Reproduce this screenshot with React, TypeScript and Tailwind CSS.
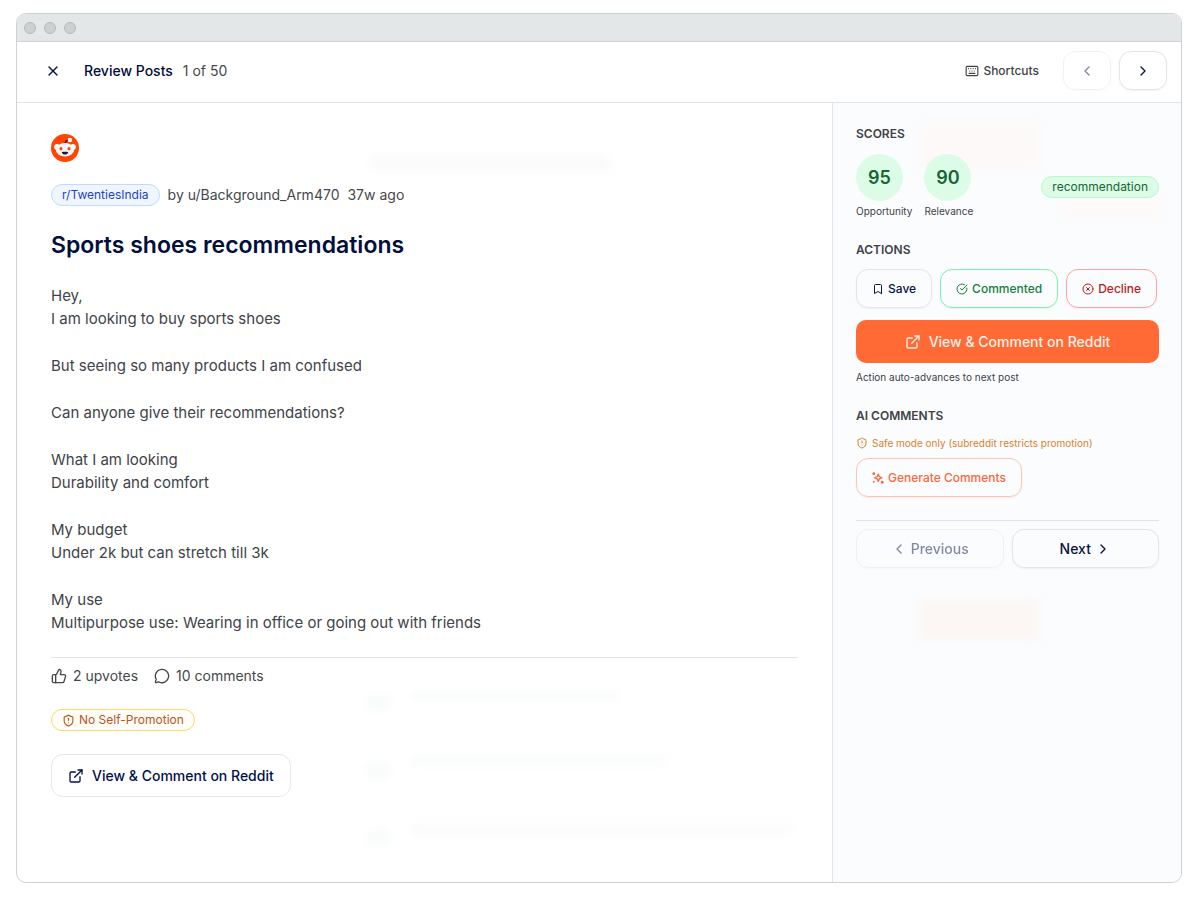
import type { ButtonHTMLAttributes, ReactNode } from 'react';
import {
    Bookmark,
    ChevronLeft,
    ChevronRight,
    CircleCheckBig,
    CircleX,
    ExternalLink,
    Keyboard,
    MessageCircle,
    ShieldAlert,
    ThumbsUp,
    X,
} from 'lucide-react';
import clsx from 'clsx';

const post = {
    subreddit: 'r/TwentiesIndia',
    author: 'u/Background_Arm470',
    age: '37w ago',
    title: 'Sports shoes recommendations',
    body: [
        ['Hey,', 'I am looking to buy sports shoes'],
        ['But seeing so many products I am confused'],
        ['Can anyone give their recommendations?'],
        ['What I am looking', 'Durability and comfort'],
        ['My budget', 'Under 2k but can stretch till 3k'],
        ['My use', 'Multipurpose use: Wearing in office or going out with friends'],
    ],
    upvotes: 2,
    comments: 10,
};

const scores = [
    { label: 'Opportunity', value: 95 },
    { label: 'Relevance', value: 90 },
];

const RedditLogo = () => (
    <svg viewBox="0 0 28 28" className="size-7" role="img" aria-label="Reddit">
        <circle cx="14" cy="14" r="14" fill="#ff4500" />
        <path d="M14 9.800c.2-2.300 1.400-3.500 3.600-4" fill="none" stroke="#4a1608" strokeWidth="1.300" />
        <circle cx="6" cy="12.900" r="2.800" fill="#fff" />
        <circle cx="22" cy="12.900" r="2.800" fill="#fff" />
        <ellipse cx="14" cy="15.800" rx="9.200" ry="6.800" fill="#f4f6f8" />
        <circle cx="18.900" cy="6" r="2.200" fill="#fff" />
        <ellipse cx="10" cy="14.700" rx="1.500" ry="1.800" fill="#ff4500" />
        <ellipse cx="18" cy="14.700" rx="1.500" ry="1.800" fill="#ff4500" />
        <path d="M10.700 18c1.100-.3 5.500-.3 6.600 0-.4 1.700-1.700 2.600-3.300 2.600s-2.900-.9-3.300-2.600z" fill="#15202b" />
    </svg>
);

const SparkleIcon = ({ className }: { className?: string }) => (
    <svg viewBox="0 0 24 24" className={className} fill="none" stroke="currentColor" strokeWidth="2.600" strokeLinejoin="round" aria-hidden="true">
        <path d="M12.500 4l2.200 5.300 5.300 2.200-5.300 2.200-2.200 5.300-2.200-5.300L5 11.500l5.300-2.200z" />
        <circle cx="3.500" cy="3.500" r="2.800" fill="currentColor" stroke="none" />
        <circle cx="3.500" cy="19.500" r="1.800" fill="currentColor" stroke="none" />
        <circle cx="20.500" cy="20.500" r="2.800" fill="currentColor" stroke="none" />
    </svg>
);

type ButtonProps = ButtonHTMLAttributes<HTMLButtonElement> & { children: ReactNode };

const Button = ({ className, children, ...props }: ButtonProps) => (
    <button
        type="button"
        className={clsx('flex items-center justify-center border rounded-xl font-medium shadow-xs', className)}
        {...props}
    >
        {children}
    </button>
);

const SectionTitle = ({ children }: { children: ReactNode }) => (
    <h2 className="text-[12px] leading-4 font-semibold text-[#404246]">{children}</h2>
);

// Blurred shape of the page behind the dialog
const Ghost = ({ className }: { className: string }) => (
    <span aria-hidden="true" className={clsx('absolute -z-10 blur-xs pointer-events-none', className)} />
);

const TitleBar = () => (
    <div className="flex items-center gap-2 h-7 pl-[7px] bg-[#e4e7e8] border-b border-[#d0d3d4]">
        <span className="size-3 rounded-full bg-[#cdd0d1] border border-[#b5b8b9]" />
        <span className="size-3 rounded-full bg-[#cdd0d1] border border-[#b5b8b9]" />
        <span className="size-3 rounded-full bg-[#cdd0d1] border border-[#b5b8b9]" />
    </div>
);

const Header = () => (
    <header className="flex items-center justify-between pl-[27px] pr-[14px] pt-[9px] pb-3 border-b border-[#e2e5e8]">
        <div className="flex items-center text-[14px] leading-5">
            <button type="button" aria-label="Close" className="p-[1px] mr-[22px] text-[#0a1445]">
                <X className="size-4" />
            </button>
            <h1 className="font-medium mr-[10px] text-[#020a3c]">Review Posts</h1>
            <span className="text-[#46484c]">1 of 50</span>
        </div>
        <div className="flex items-center gap-2">
            <button type="button" className="flex items-center gap-1 mr-4 text-[12px] leading-4 font-medium text-[#404246]">
                <Keyboard className="size-[14px]" />
                Shortcuts
            </button>
            <Button aria-label="Previous post" disabled className="w-12 h-[39px] border-[#e2e5e8] text-[#0a1445] opacity-50">
                <ChevronLeft className="size-4" />
            </Button>
            <Button aria-label="Next post" className="w-12 h-[39px] border-[#e2e5e8] text-[#0a1445]">
                <ChevronRight className="size-4" />
            </Button>
        </div>
    </header>
);

const Post = () => (
    <main className="relative isolate flex-1 min-w-0 px-[34px] pt-[31px] pb-8">
        <Ghost className="left-[353px] top-[54px] w-60 h-3 bg-[#f9f9f9]" />
        <Ghost className="left-[393px] top-[587px] w-52 h-3 bg-[#fbfcfc]" />
        <Ghost className="left-[393px] top-[652px] w-64 h-3 bg-[#fbfcfc]" />
        <Ghost className="left-[393px] top-[721px] w-96 h-3 bg-[#fbfcfc]" />
        <Ghost className="left-[349px] top-[592px] w-6 h-4 bg-[#f8fcfa]" />
        <Ghost className="left-[349px] top-[660px] w-6 h-4 bg-[#f8fcfa]" />
        <Ghost className="left-[349px] top-[727px] w-6 h-4 bg-[#f8fcfa]" />

        <RedditLogo />

        <div className="flex items-center gap-2 mt-[22px] text-[14px] leading-5 text-[#46484c]">
            <span className="px-[10px] rounded-full border border-[#bfdbfe] bg-[#eff6ff] text-[12px] text-[#1d43c8]">
                {post.subreddit}
            </span>
            <span>by {post.author}</span>
            <span>{post.age}</span>
        </div>

        <h2 className="mt-[23px] text-[23px] leading-8 font-semibold text-[#020f3c]">{post.title}</h2>

        <div className="mt-[23px] space-y-6 text-[15px] leading-[23px] text-[#404348]">
            {post.body.map((lines) => (
                <p key={lines[0]} className="whitespace-pre-line">{lines.join('\n')}</p>
            ))}
        </div>

        <div className="flex items-center gap-4 mt-[23px] pt-2 border-t border-[#e2e5e8] text-[14px] leading-5 text-[#46484c]">
            <span className="flex items-center gap-[6px]">
                <ThumbsUp className="size-4" />
                {post.upvotes} upvotes
            </span>
            <span className="flex items-center gap-[6px]">
                <MessageCircle className="size-4" />
                {post.comments} comments
            </span>
        </div>

        <div className="flex mt-[23px]">
            <span className="flex items-center gap-1 px-[10px] rounded-full border border-[#fcd96a] bg-[#fffdf8] text-[12px] leading-5 text-[#b8561a]">
                <ShieldAlert className="size-[13px]" />
                No Self-Promotion
            </span>
        </div>

        <a
            href="#reddit"
            className="inline-flex items-center gap-2 mt-[23px] h-[43px] px-4 rounded-xl border border-[#e2e8f0] text-[14px] leading-5 font-medium text-[#020f4c]"
        >
            <ExternalLink className="size-4" />
            View &amp; Comment on Reddit
        </a>
    </main>
);

const Sidebar = () => (
    <aside className="relative isolate w-[349px] shrink-0 pl-[23px] pr-[22px] pt-[23px] pb-8 border-l border-[#e2e5e8] bg-[#fbfcfe]">
        <Ghost className="left-[86px] top-5 w-30 h-12 bg-[#fcf9f8]" />
        <Ghost className="left-[228px] top-24 w-25 h-5 bg-[#fcf9f8]" />
        <Ghost className="left-[86px] top-[497px] w-30 h-10 bg-[#fcf7f4]" />

        <SectionTitle>SCORES</SectionTitle>
        <div className="flex items-center justify-between mt-3">
            <dl className="flex gap-3">
                {scores.map((score) => (
                    <div key={score.label} className="flex flex-col-reverse gap-[2px]">
                        <dt className="text-[10px] leading-4 text-[#404246]">{score.label}</dt>
                        <dd className="flex items-center justify-center size-[47px] rounded-full bg-[#dcfce7] text-[18px] leading-6 font-semibold text-[#166534]">
                            {score.value}
                        </dd>
                    </div>
                ))}
            </dl>
            <span className="px-[10px] rounded-full border border-[#b9f8cf] bg-[#dcfce7] text-[12px] leading-5 text-[#166534]">
                recommendation
            </span>
        </div>

        <div className="mt-[23px]">
            <SectionTitle>ACTIONS</SectionTitle>
            <div className="flex gap-2 mt-[11px] text-[12px] leading-4">
                <Button className="gap-1 h-[39px] px-[15px] border-[#e2e5ea] text-[#0a1445]">
                    <Bookmark className="size-3" />
                    Save
                </Button>
                <Button className="gap-1 h-[39px] px-[15px] border-[#7bf1a8] text-[#15803d]">
                    <CircleCheckBig className="size-3" />
                    Commented
                </Button>
                <Button className="gap-1 h-[39px] px-[15px] border-[#ffa2a2] text-[#b91c1c]">
                    <CircleX className="size-3" />
                    Decline
                </Button>
            </div>
            <a
                href="#reddit"
                className="flex items-center justify-center gap-2 mt-3 h-[43px] rounded-[10px] bg-[#ff6a35] text-[14px] leading-5 font-medium text-[#fff1ea]"
            >
                <ExternalLink className="size-4" />
                View &amp; Comment on Reddit
            </a>
            <p className="mt-[6px] text-[10px] leading-4 text-[#404246]">Action auto-advances to next post</p>
        </div>

        <div className="mt-[23px]">
            <SectionTitle>AI COMMENTS</SectionTitle>
            <p className="flex items-center gap-1 mt-[11px] text-[10px] leading-4 text-[#d9822b]">
                <ShieldAlert className="size-3" />
                Safe mode only (subreddit restricts promotion)
            </p>
            <Button className="gap-1 mt-[7px] h-[39px] px-[15px] border-[#ffc4b0] text-[12px] leading-4 text-[#f56a3c]">
                <SparkleIcon className="size-3" />
                Generate Comments
            </Button>
        </div>

        <nav className="grid grid-cols-2 gap-2 mt-[23px] pt-2 border-t border-[#e2e5e8] text-[14px] leading-5">
            <Button disabled className="gap-1 h-[39px] border-[#e2e5ea] text-[#0a1445] opacity-50">
                <ChevronLeft className="size-4" />
                Previous
            </Button>
            <Button className="gap-1 h-[39px] border-[#e2e5ea] text-[#0a1445]">
                Next
                <ChevronRight className="size-4" />
            </Button>
        </nav>
    </aside>
);

export default function App() {
    return (
        <div className="flex min-h-screen pt-[13px] pr-[18px] pb-[17px] pl-4 bg-white font-['Inter',sans-serif]">
            <div className="flex-1 flex flex-col min-w-0 rounded-[10px] border border-[#cfd2d3] overflow-hidden">
                <TitleBar />
                <Header />
                <div className="flex-1 flex">
                    <Post />
                    <Sidebar />
                </div>
            </div>
        </div>
    );
}
